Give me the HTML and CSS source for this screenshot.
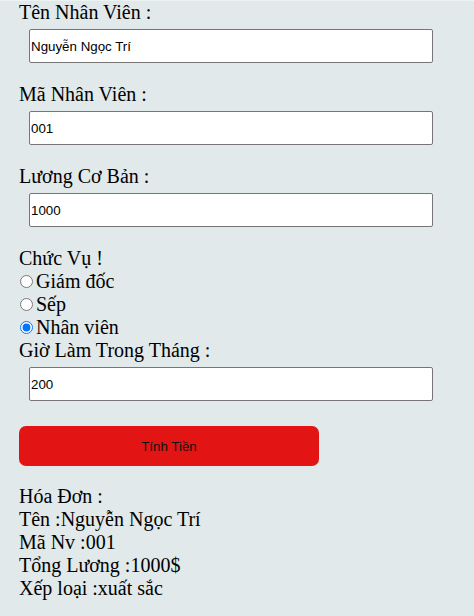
FILE: index.html
```html
<!DOCTYPE html>
<html lang="vi">
<head>
<meta charset="utf-8">
<title>Tính Lương</title>
<link rel="stylesheet" href="styles.css">
</head>
<body>
<form class="form">
  <div class="field">
    <label class="label" for="ten">Tên Nhân Viên :</label>
    <input class="input" id="ten" type="text" value="Nguyễn Ngọc Trí">
  </div>
  <div class="field">
    <label class="label" for="ma">Mã Nhân Viên :</label>
    <input class="input" id="ma" type="text" value="001">
  </div>
  <div class="field">
    <label class="label" for="luong">Lương Cơ Bản :</label>
    <input class="input" id="luong" type="text" value="1000">
  </div>
  <div class="field">
    <div class="label">Chức Vụ !</div>
    <label class="radio-row"><input class="radio" type="radio" name="cv">Giám đốc</label>
    <label class="radio-row"><input class="radio" type="radio" name="cv">Sếp</label>
    <label class="radio-row"><input class="radio" type="radio" name="cv" checked>Nhân viên</label>
    <label class="label" for="gio">Giờ Làm Trong Tháng :</label>
    <input class="input" id="gio" type="text" value="200">
  </div>
  <button class="btn" type="button">Tính Tiền</button>
  <div class="bill">
    <div>Hóa Đơn :</div>
    <div>Tên :Nguyễn Ngọc Trí</div>
    <div>Mã Nv :001</div>
    <div>Tổng Lương :1000$</div>
    <div>Xếp loại :xuất sắc</div>
  </div>
</form>
</body>
</html>
```

FILE: styles.css
```css
html, body {
  margin: 0;
  background: #e1e9ea;
}
body {
  border-top: 1px solid #edf2f2;
  font-family: "Liberation Serif", "Times New Roman", serif;
  font-size: 20px;
  line-height: 23px;
  color: #000;
}
.form {
  display: flex;
  flex-direction: column;
  align-items: flex-start;
  padding-left: 19px;
}
.field {
  display: flex;
  flex-direction: column;
  align-items: flex-start;
  margin-bottom: 20px;
}
.field:nth-child(4) {
  margin-bottom: 25px;
}
.label {
  display: block;
  height: 23px;
}
.input {
  box-sizing: border-box;
  width: 404px;
  height: 34px;
  margin: 5px 0 0 10px;
  padding: 1px 1px;
  border: 1px solid #767676;
  border-radius: 2px;
  background: #fff;
  font-family: "Liberation Sans", Arial, sans-serif;
  font-size: 13.33px;
  color: #000;
}
.radio-row {
  display: block;
  height: 23px;
}
.radio {
  width: 13px;
  height: 13px;
  margin: 3px 3px 0 1px;
  vertical-align: baseline;
}
.btn {
  width: 300px;
  height: 40px;
  border: none;
  border-radius: 7px;
  background: #e31414;
  color: #111;
  font-family: "Liberation Sans", Arial, sans-serif;
  font-size: 13.33px;
  margin-bottom: 19px;
}
.bill {
  display: flex;
  flex-direction: column;
}
```
